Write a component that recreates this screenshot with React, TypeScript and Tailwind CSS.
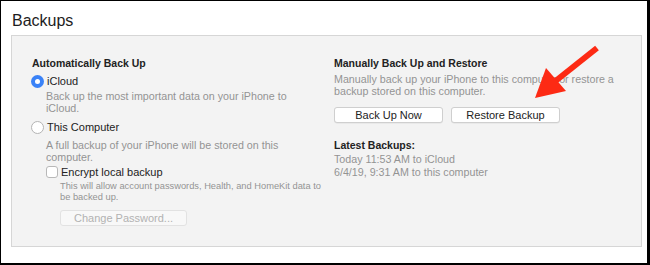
const font = { fontFamily: '"Liberation Sans", Arial, sans-serif' };

const Radio = ({ checked }: { checked?: boolean }) =>
  checked ? (
    <span className="flex h-[13px] w-[13px] shrink-0 items-center justify-center rounded-full bg-[#3a82f7]">
      <span className="h-[5px] w-[5px] rounded-full bg-white" />
    </span>
  ) : (
    <span className="h-[13px] w-[13px] shrink-0 rounded-full border border-[#b4b4b4] bg-white" />
  );

const MacButton = ({ label, disabled }: { label: string; disabled?: boolean }) => (
  <div
    className={
      disabled
        ? "flex h-[16px] w-[127px] items-center justify-center rounded-[3px] border border-[#e2e2e2] bg-[#f8f8f8] text-[11px] text-[#b2b2b2]"
        : "flex h-[16px] w-[109px] items-center justify-center rounded-[3px] border border-[#cfcfcf] bg-white text-[11px] text-[#222] shadow-[0_0.5px_0.5px_rgba(0,0,0,0.08)]"
    }
  >
    {label}
  </div>
);

export default function App() {
  return (
    <div
      style={font}
      className="relative h-[265px] w-[650px] overflow-hidden border-t border-l border-r-[3px] border-b-2 border-black bg-white pt-[10px]"
    >
      <h1 className="ml-[11px] text-[16px] leading-[20px] text-[#1d1d1d]">Backups</h1>

      <div className="ml-[10px] mt-[4px] flex h-[212px] w-[631px] border border-[#d6d6d6] bg-[#f3f3f3] pl-[20px] pt-[20px]">
        {/* left column */}
        <div className="flex w-[302px] flex-col">
          <div className="text-[10.5px] font-bold leading-[14px] text-[#222]">Automatically Back Up</div>

          <div className="mt-[4px] flex h-[14px] items-center gap-[3px] -ml-[1px]">
            <Radio checked />
            <span className="text-[11px] text-[#222]">iCloud</span>
          </div>
          <p className="ml-[14px] mt-[2px] text-[10.7px] leading-[12px] text-[#939393]">
            Back up the most important data on your iPhone to
            <br />
            iCloud.
          </p>

          <div className="mt-[6px] flex h-[14px] items-center gap-[3px] -ml-[1px]">
            <Radio />
            <span className="text-[11px] text-[#222]">This Computer</span>
          </div>
          <p className="ml-[14px] mt-[5px] text-[10.7px] leading-[12px] text-[#939393]">
            A full backup of your iPhone will be stored on this
            <br />
            computer.
          </p>

          <div className="ml-[14px] mt-[2px] flex h-[14px] items-center gap-[3px]">
            <span className="h-[12px] w-[12px] rounded-[3px] border border-[#b8b8b8] bg-white" />
            <span className="text-[11px] text-[#222]">Encrypt local backup</span>
          </div>
          <p className="ml-[28px] mt-[2px] text-[9.3px] leading-[11px] text-[#939393]">
            This will allow account passwords, Health, and HomeKit data to
            <br />
            be backed up.
          </p>

          <div className="ml-[28px] mt-[7px]">
            <MacButton label="Change Password..." disabled />
          </div>
        </div>

        {/* right column */}
        <div className="flex flex-col">
          <div className="text-[10.5px] font-bold leading-[14px] text-[#222]">Manually Back Up and Restore</div>
          <p className="mt-[3px] text-[10.7px] leading-[12px] text-[#939393]">
            Manually back up your iPhone to this computer or restore a
            <br />
            backup stored on this computer.
          </p>
          <div className="mt-[10px] flex gap-[8px]">
            <MacButton label="Back Up Now" />
            <MacButton label="Restore Backup" />
          </div>

          <div className="mt-[15px] text-[10.5px] font-bold leading-[14px] text-[#222]">Latest Backups:</div>
          <p className="mt-[1px] text-[10.7px] leading-[13px] text-[#939393]">
            Today 11:53 AM to iCloud
            <br />
            6/4/19, 9:31 AM to this computer
          </p>
        </div>
      </div>

      {/* annotation arrow */}
      <svg className="pointer-events-none absolute left-[-1px] top-[-1px]" width="650" height="265" viewBox="0 0 650 265">
        <line x1="597" y1="48" x2="553" y2="83" stroke="#fd2a14" strokeWidth="6" />
        <polygon points="535,98 546,68 566,91" fill="#fd2a14" />
      </svg>
    </div>
  );
}
